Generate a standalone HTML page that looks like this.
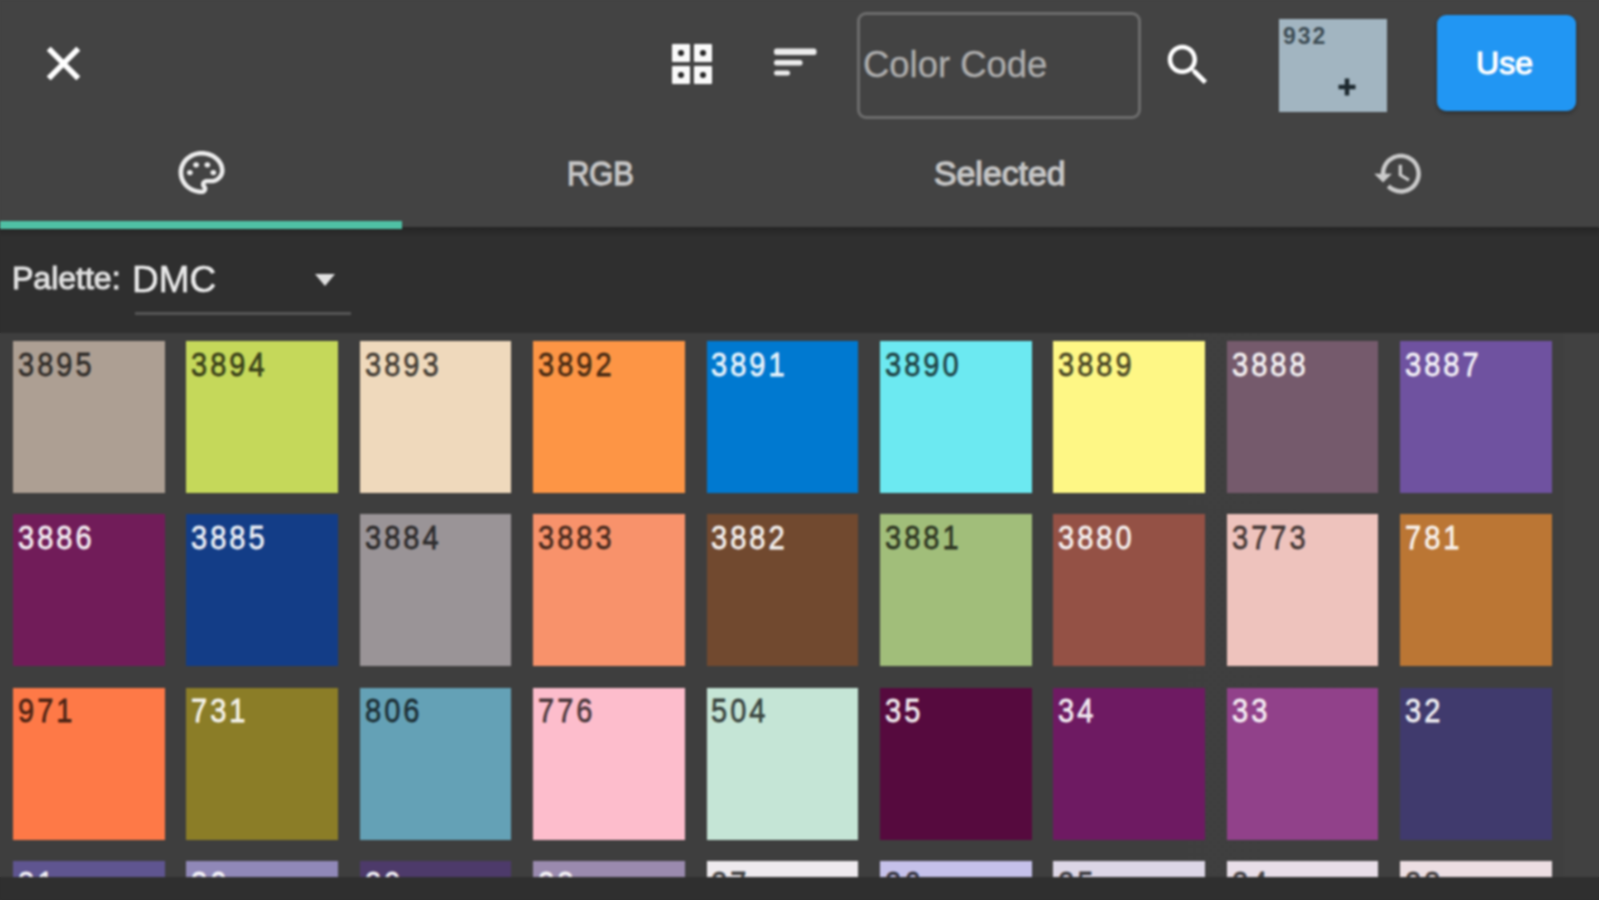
<!DOCTYPE html>
<html><head><meta charset="utf-8">
<style>
*{margin:0;padding:0;box-sizing:border-box}
html,body{width:1599px;height:900px;overflow:hidden;background:linear-gradient(#434343 0,#434343 228px,#2f2f2f 228px,#2f2f2f 333px,#3f3f3f 333px,#3f3f3f 877px,#2f2f2f 877px);font-family:"Liberation Sans",sans-serif}
.abs{position:absolute}
#wrap{position:absolute;left:0;top:0;width:1599px;height:900px;filter:blur(1px)}
#top{position:absolute;left:0;top:0;width:1599px;height:227px;background:#434343}
#ind{position:absolute;z-index:5;left:0;top:221px;width:402px;height:8px;background:#4fc0a4}
#shadow{position:absolute;left:0;top:227px;width:1599px;height:10px;background:linear-gradient(#242424,#2f2f2f)}
#pal{position:absolute;left:0;top:228px;width:1599px;height:105px;background:#2f2f2f}
#grid{position:absolute;left:0;top:333px;width:1599px;height:544px;background:linear-gradient(90deg,#3e3e3e 0,#3f3f3f 1564px,#414141 1564px);overflow:hidden}
#bottom{position:absolute;left:0;top:877px;width:1599px;height:23px;background:#2f2f2f}
.sw{position:absolute;width:151.6px;height:152px}
.sw span{position:absolute;left:4.8px;top:6.5px;font-size:33px;line-height:34px;letter-spacing:3.4px;transform:scaleX(0.88);transform-origin:0 0;-webkit-text-stroke:0.8px currentColor}
.tab{position:absolute;top:152px;font-size:31px;color:#c4c4c4;line-height:40px;-webkit-text-stroke:1.3px #c4c4c4}
</style></head><body>
<div id="wrap">
<div id="top"></div>
<!-- close X -->
<svg class="abs" style="left:35.7px;top:35.7px" width="55" height="55" viewBox="0 0 24 24">
 <path fill="#fff" stroke="#fff" stroke-width="0.45" stroke-linejoin="round" d="M19 6.41L17.59 5 12 10.59 6.41 5 5 6.41 10.59 12 5 17.59 6.41 19 12 13.41 17.59 19 19 17.59 13.41 12z"/>
</svg>
<!-- grid icon -->
<svg class="abs" style="left:671.5px;top:43.5px" width="40" height="40" viewBox="0 0 40 40">
 <g fill="#fafafa"><rect x="0" y="0" width="18" height="18" rx="1"/><rect x="22" y="0" width="18" height="18" rx="1"/><rect x="0" y="22" width="18" height="18" rx="1"/><rect x="22" y="22" width="18" height="18" rx="1"/></g>
 <g fill="#262626"><circle cx="9" cy="9" r="3"/><circle cx="31" cy="9" r="3"/><circle cx="9" cy="31" r="3"/><circle cx="31" cy="31" r="3"/></g>
</svg>
<!-- sort icon -->
<svg class="abs" style="left:770px;top:40px" width="50" height="40" viewBox="0 0 50 40">
 <g fill="#ececec"><rect x="4" y="8.5" width="42.5" height="6.5" rx="2.5"/><rect x="4" y="20" width="28.5" height="5.5" rx="2.5"/><rect x="4" y="30.5" width="16" height="5" rx="2.5"/></g>
</svg>
<!-- text field -->
<div class="abs" style="left:857px;top:12px;width:284px;height:107px;border:3px solid #6c6c6c;border-radius:9px"></div>
<div class="abs" style="left:863px;top:45px;font-size:37px;color:#acacac;line-height:40px;transform:scaleX(0.985);transform-origin:0 0;-webkit-text-stroke:0.4px #acacac">Color Code</div>
<!-- search -->
<svg class="abs" style="left:1160.9px;top:37.8px" width="54" height="54" viewBox="0 0 24 24">
 <path fill="#fff" d="M15.5 14h-.79l-.28-.27C15.41 12.59 16 11.11 16 9.5 16 5.91 13.09 3 9.5 3S3 5.91 3 9.5 5.91 16 9.5 16c1.61 0 3.090-.59 4.23-1.57l.27.28v.79l5 4.99L20.49 19l-4.99-5zm-6 0C7.01 14 5 11.99 5 9.5S7.01 5 9.5 5 14 7.01 14 9.5 11.99 14 9.5 14z"/>
</svg>
<!-- selected swatch -->
<div class="abs" style="left:1279px;top:19px;width:108px;height:93px;background:#a2b5c1"></div>
<div class="abs" style="left:1283px;top:24px;font-size:23px;font-weight:bold;letter-spacing:2px;color:#3e4d55;line-height:24px">932</div>
<svg class="abs" style="left:1337px;top:77px" width="20" height="20" viewBox="0 0 20 20">
 <path d="M10 1.5 V18.5 M1.5 10 H18.5" stroke="#1e2a30" stroke-width="4.5"/>
</svg>
<!-- Use button -->
<div class="abs" style="left:1437px;top:15px;width:139px;height:96px;background:#2196f3;border-radius:9px;box-shadow:0 2px 4px rgba(0,0,0,.35)"></div>
<div class="abs" style="left:1435px;top:43px;width:139px;text-align:center;font-size:32px;color:#fff;line-height:40px;-webkit-text-stroke:1.2px #fff">Use</div>

<!-- tabs -->
<svg class="abs" style="left:174.1px;top:145.4px;transform:scaleY(0.935)" width="55.2" height="55.2" viewBox="0 0 24 24">
 <g fill="#ececec">
 <path d="M12 22C6.49 22 2 17.51 2 12S6.49 2 12 2s10 4.04 10 9c0 3.31-2.69 6-6 6h-1.77c-.28 0-.5.22-.5.5 0 .12.05.23.13.33.41.47.64 1.06.64 1.67 0 1.38-1.12 2.5-2.5 2.5zm0-18c-4.41 0-8 3.59-8 8s3.59 8 8 8c.28 0 .5-.22.5-.5 0-.16-.08-.28-.14-.35-.41-.46-.63-1.05-.63-1.650 0-1.38 1.12-2.5 2.5-2.5H16c2.21 0 4-1.79 4-4 0-3.86-3.59-7-8-7z"/>
 <circle cx="6.9" cy="12" r="1.25"/><circle cx="9.6" cy="8.4" r="1.25"/><circle cx="14.5" cy="8.4" r="1.25"/><circle cx="17.1" cy="12" r="1.25"/>
 </g>
</svg>
<div class="tab" style="left:567px;top:154px;font-size:33px;transform:scaleX(0.935);transform-origin:0 0">RGB</div>
<div class="tab" style="left:934px;top:154px;font-size:33px;transform:scaleX(1.025);transform-origin:0 0">Selected</div>
<svg class="abs" style="left:1372.4px;top:146.7px" width="53.3" height="53.3" viewBox="0 0 24 24">
 <path fill="#cacaca" d="M13 3c-4.97 0-9 4.03-9 9H1l3.89 3.89.07.14L9 12H6c0-3.87 3.13-7 7-7s7 3.13 7 7-3.13 7-7 7c-1.93 0-3.68-.79-4.94-2.06l-1.42 1.42C8.27 19.99 10.51 21 13 21c4.97 0 9-4.03 9-9s-4.03-9-9-9zm-1 5v5l4.28 2.54.72-1.21-3.5-2.08V8H12z"/>
</svg>
<div id="ind"></div>

<div id="pal"></div>
<div id="shadow"></div>
<div class="abs" style="left:12px;top:260px;font-size:32px;color:#e0e0e0;line-height:36px;-webkit-text-stroke:1.1px #e0e0e0;transform:scaleX(1.0);transform-origin:0 0">Palette:</div>
<div class="abs" style="left:132px;top:261px;font-size:37px;color:#ececec;line-height:38px;-webkit-text-stroke:0.5px #ececec">DMC</div>
<svg class="abs" style="left:314px;top:273px" width="22" height="14" viewBox="0 0 22 14"><path d="M1 1 L21 1 L11 13 Z" fill="#e0e0e0"/></svg>
<div class="abs" style="left:135px;top:312px;width:216px;height:3px;background:#555"></div>
<div id="grid">
<div class="sw" style="left:13.0px;top:8.3px;background:#ad9f93"><span style="color:rgba(0,0,0,0.66)">3895</span></div>
<div class="sw" style="left:186.4px;top:8.3px;background:#c5d85a"><span style="color:rgba(0,0,0,0.66)">3894</span></div>
<div class="sw" style="left:359.8px;top:8.3px;background:#efd9bc"><span style="color:rgba(0,0,0,0.66)">3893</span></div>
<div class="sw" style="left:533.2px;top:8.3px;background:#fd9545"><span style="color:rgba(0,0,0,0.66)">3892</span></div>
<div class="sw" style="left:706.6px;top:8.3px;background:#0079d0"><span style="color:rgba(255,255,255,0.9)">3891</span></div>
<div class="sw" style="left:880.0px;top:8.3px;background:#6ce9f1"><span style="color:rgba(0,0,0,0.66)">3890</span></div>
<div class="sw" style="left:1053.4px;top:8.3px;background:#fef785"><span style="color:rgba(0,0,0,0.66)">3889</span></div>
<div class="sw" style="left:1226.8px;top:8.3px;background:#755a6c"><span style="color:rgba(255,255,255,0.9)">3888</span></div>
<div class="sw" style="left:1400.2px;top:8.3px;background:#6f52a0"><span style="color:rgba(255,255,255,0.9)">3887</span></div>
<div class="sw" style="left:13.0px;top:181.4px;background:#711c59"><span style="color:rgba(255,255,255,0.9)">3886</span></div>
<div class="sw" style="left:186.4px;top:181.4px;background:#133d87"><span style="color:rgba(255,255,255,0.9)">3885</span></div>
<div class="sw" style="left:359.8px;top:181.4px;background:#9a9497"><span style="color:rgba(0,0,0,0.66)">3884</span></div>
<div class="sw" style="left:533.2px;top:181.4px;background:#f8926b"><span style="color:rgba(0,0,0,0.66)">3883</span></div>
<div class="sw" style="left:706.6px;top:181.4px;background:#71492f"><span style="color:rgba(255,255,255,0.9)">3882</span></div>
<div class="sw" style="left:880.0px;top:181.4px;background:#a1be7a"><span style="color:rgba(0,0,0,0.66)">3881</span></div>
<div class="sw" style="left:1053.4px;top:181.4px;background:#945145"><span style="color:rgba(255,255,255,0.9)">3880</span></div>
<div class="sw" style="left:1226.8px;top:181.4px;background:#eec3bd"><span style="color:rgba(0,0,0,0.66)">3773</span></div>
<div class="sw" style="left:1400.2px;top:181.4px;background:#bb7634"><span style="color:rgba(255,255,255,0.9)">781</span></div>
<div class="sw" style="left:13.0px;top:354.5px;background:#fe7947"><span style="color:rgba(0,0,0,0.66)">971</span></div>
<div class="sw" style="left:186.4px;top:354.5px;background:#8b7d27"><span style="color:rgba(255,255,255,0.9)">731</span></div>
<div class="sw" style="left:359.8px;top:354.5px;background:#64a1b6"><span style="color:rgba(0,0,0,0.66)">806</span></div>
<div class="sw" style="left:533.2px;top:354.5px;background:#fdbdcc"><span style="color:rgba(0,0,0,0.66)">776</span></div>
<div class="sw" style="left:706.6px;top:354.5px;background:#c5e5d6"><span style="color:rgba(0,0,0,0.66)">504</span></div>
<div class="sw" style="left:880.0px;top:354.5px;background:#560a3e"><span style="color:rgba(255,255,255,0.9)">35</span></div>
<div class="sw" style="left:1053.4px;top:354.5px;background:#6e1a62"><span style="color:rgba(255,255,255,0.9)">34</span></div>
<div class="sw" style="left:1226.8px;top:354.5px;background:#91418a"><span style="color:rgba(255,255,255,0.9)">33</span></div>
<div class="sw" style="left:1400.2px;top:354.5px;background:#403a6d"><span style="color:rgba(255,255,255,0.9)">32</span></div>
<div class="sw" style="left:13.0px;top:527.6px;background:#5f5590"><span style="color:rgba(255,255,255,0.9)">31</span></div>
<div class="sw" style="left:186.4px;top:527.6px;background:#9088b8"><span style="color:rgba(255,255,255,0.9)">30</span></div>
<div class="sw" style="left:359.8px;top:527.6px;background:#4d3a6a"><span style="color:rgba(255,255,255,0.9)">29</span></div>
<div class="sw" style="left:533.2px;top:527.6px;background:#9a8aae"><span style="color:rgba(255,255,255,0.9)">28</span></div>
<div class="sw" style="left:706.6px;top:527.6px;background:#eeeaee"><span style="color:rgba(0,0,0,0.66)">27</span></div>
<div class="sw" style="left:880.0px;top:527.6px;background:#c5c1ea"><span style="color:rgba(0,0,0,0.66)">26</span></div>
<div class="sw" style="left:1053.4px;top:527.6px;background:#dcd6e6"><span style="color:rgba(0,0,0,0.66)">25</span></div>
<div class="sw" style="left:1226.8px;top:527.6px;background:#e8dee8"><span style="color:rgba(0,0,0,0.66)">24</span></div>
<div class="sw" style="left:1400.2px;top:527.6px;background:#ecdee2"><span style="color:rgba(0,0,0,0.66)">23</span></div>
</div>
<div id="bottom"></div>
</div>
</body></html>
